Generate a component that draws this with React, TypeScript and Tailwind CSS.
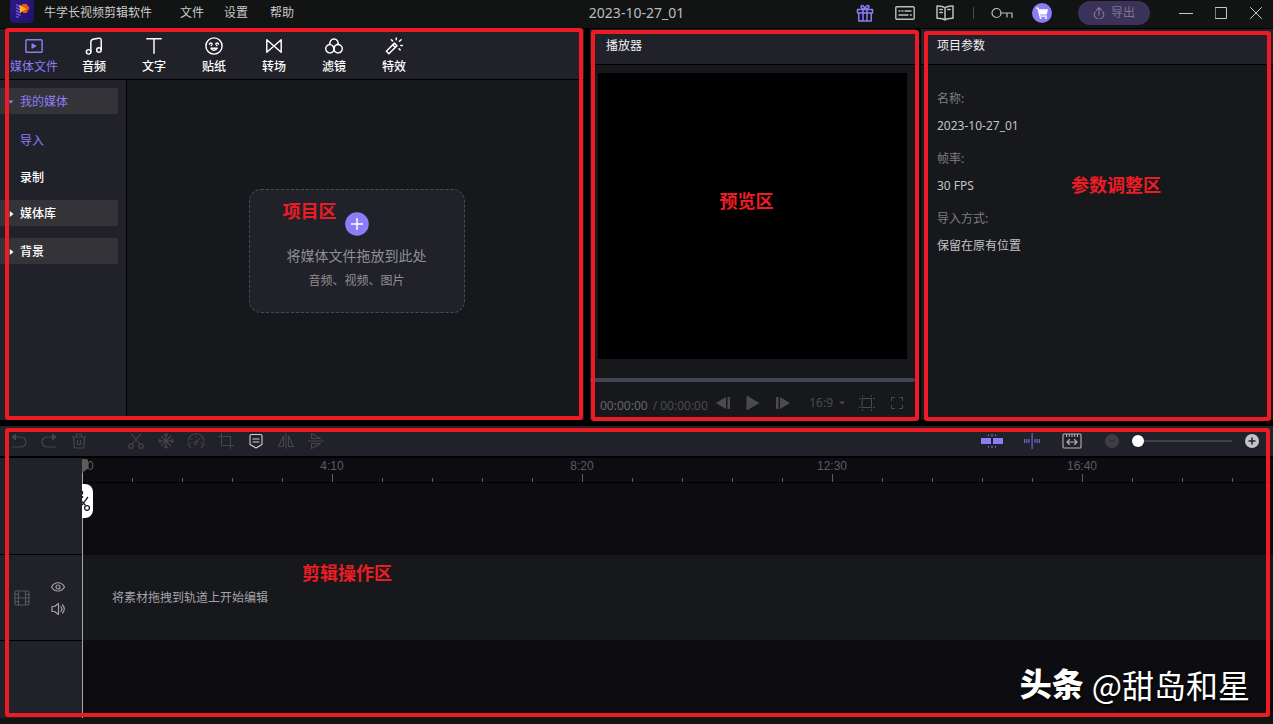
import type { ReactNode } from "react";

const FONT = "font-['Noto_Sans','Noto_Sans_CJK_SC',sans-serif]";

type IconProps = { children: ReactNode; box: string; className: string; stroke?: number };

function Icon({ children, box, className, stroke = 1.2 }: IconProps) {
  return (
    <svg
      viewBox={box}
      className={className}
      fill="none"
      stroke="currentColor"
      strokeWidth={stroke}
      strokeLinecap="round"
      strokeLinejoin="round"
      aria-hidden="true"
    >
      {children}
    </svg>
  );
}

function IconButton({ label, className, children }: { label: string; className: string; children: ReactNode }) {
  return (
    <button type="button" aria-label={label} className={`flex shrink-0 items-center justify-center ${className}`}>
      {children}
    </button>
  );
}

function Outline({ className }: { className: string }) {
  return <div className={`pointer-events-none absolute z-20 rounded-[3px] border-4 border-[#ed1c24] ${className}`} />;
}

function Note({ children, className }: { children: ReactNode; className: string }) {
  return (
    <span className={`absolute z-20 text-[18px] leading-6 font-bold whitespace-nowrap text-[#ed1c24] ${className}`}>
      {children}
    </span>
  );
}

function Logo() {
  return (
    <svg viewBox="0 0 24 24" className="size-6 shrink-0" aria-hidden="true">
      <defs>
        <linearGradient id="logoBg" x1="0" y1="0" x2="1" y2="1">
          <stop offset="0" stopColor="#2c1a86" />
          <stop offset="1" stopColor="#1f1168" />
        </linearGradient>
      </defs>
      <rect width="24" height="24" rx="4" fill="url(#logoBg)" />
      <path d="M6 5.500l4 2.500M6 8.500l4 2.500M6 11.500l4.500 2.500M6 14.500l4.500 2M6 17.500l3 1" stroke="#7d63f0" strokeWidth="1.300" />
      <path d="M12 5h4.500l3 4-3 5h-3.500z" fill="#f0501c" />
      <path d="M9.500 5.500l7 4.500-6.500 4z" fill="#ffb81a" />
    </svg>
  );
}

function TitleBar() {
  return (
    <header className="grid h-[29px] grid-cols-[1fr_auto_1fr] border-b border-black bg-[#111412] pb-0.5 text-[12px] leading-[18px] text-[#c9c9cb]">
      <div className="flex items-center pl-2.5">
        <div className="-mt-1">
          <Logo />
        </div>
        <span className="ml-2.5 whitespace-nowrap">牛学长视频剪辑软件</span>
        <nav className="ml-7 flex gap-5 whitespace-nowrap">
          <button type="button">文件</button>
          <button type="button">设置</button>
          <button type="button" className="ml-0.5">帮助</button>
        </nav>
      </div>
      <h1 className="self-center text-[14px] text-[#bcbcc0]">2023-10-27_01</h1>
      <div className="flex items-center justify-end">
        <IconButton label="礼物" className="w-10 text-[#8d7cf8]">
          <Icon box="0 0 18 18" className="size-[18px]" stroke={1.5}>
            <path d="M1.500 5.500h15v3.500h-15zM2.800 9v8h12.400V9M7 5.500V17M11 5.500V17M9 5.200C7 5 5 4 5 2.500 5 .8 8 .8 9 5.200zM9 5.200C11 5 13 4 13 2.500 13 .8 10 .8 9 5.200z" />
          </Icon>
        </IconButton>
        <IconButton label="快捷键" className="w-10 text-[#bdbdbf]">
          <Icon box="0 0 20 14" className="h-3.5 w-5" stroke={1.4}>
            <rect x=".8" y=".8" width="18.400" height="12.400" rx="1" />
            <path d="M4 5h1M7 5h1M10 5h6M4 9h9M15.500 9h.8" />
          </Icon>
        </IconButton>
        <IconButton label="教程" className="w-10 text-[#bdbdbf]">
          <Icon box="0 0 18 16" className="h-4 w-[18px]" stroke={1.5}>
            <path d="M9 2.800v12M9 2.800C7 1 4 .8 1 .9v12.300c3-.1 6 .1 8 1.800 2-1.700 5-1.900 8-1.800V.9C14 .8 11 1 9 2.800zM3.800 4.500h2.500M3.800 7.500h2.500M11.700 4.500h2.500" />
          </Icon>
        </IconButton>
        <div className="mx-2 h-3 w-px shrink-0 bg-[#4b4b50]" />
        <IconButton label="激活" className="w-10 text-[#bdbdbf]">
          <Icon box="0 0 22 12" className="h-3 w-[22px]" stroke={1.2}>
            <circle cx="5.500" cy="6" r="4.500" />
            <path d="M10 6h11v4.500M16 6v4" />
          </Icon>
        </IconButton>
        <IconButton label="购买" className="w-10 text-white">
          <svg viewBox="0 0 20 20" className="size-5" aria-hidden="true">
            <circle cx="10" cy="10" r="10" fill="#8d7cf8" />
            <path d="M4 5.200h2l1.800 8H15" fill="none" stroke="currentColor" strokeWidth="1.200" />
            <path d="M6.500 6.300H16l-1.300 5.200H7.700z" fill="currentColor" />
            <circle cx="8.500" cy="15" r="1" fill="currentColor" />
            <circle cx="14" cy="15" r="1" fill="currentColor" />
          </svg>
        </IconButton>
        <button
          type="button"
          className="ml-4 flex h-6 w-[72px] shrink-0 items-center justify-center gap-1.5 rounded-full bg-[#3a3259] text-[#7d778f]"
        >
          <Icon box="0 0 12 12" className="size-3" stroke={1.2}>
            <path d="M2.200 4.800a4.600 4.600 0 1 0 7.600 0M6 8.200V.8M3.600 3L6 .7 8.400 3" />
          </Icon>
          导出
        </button>
        <div className="ml-[18px] flex text-[#c6c6c8]">
          <IconButton label="最小化" className="w-[35px]">
            <Icon box="0 0 14 14" className="size-3.5" stroke={1}>
              <path d="M0 7.500h14" />
            </Icon>
          </IconButton>
          <IconButton label="最大化" className="w-[35px]">
            <Icon box="0 0 12 12" className="size-3" stroke={1}>
              <path d="M.5.500h11v11H.500z" />
            </Icon>
          </IconButton>
          <IconButton label="关闭" className="w-[35px]">
            <Icon box="0 0 12 12" className="size-3" stroke={1}>
              <path d="M.5.500l11 11M11.500.500l-11 11" />
            </Icon>
          </IconButton>
        </div>
      </div>
    </header>
  );
}

const TABS: { name: string; art: ReactNode }[] = [
  {
    name: "媒体文件",
    art: (
      <>
        <rect x="1" y="3" width="18" height="14" rx="1" />
        <path d="M8 7.800v4.400l3.800-2.200z" fill="currentColor" />
      </>
    ),
  },
  {
    name: "音频",
    art: (
      <>
        <circle cx="4" cy="16.500" r="2.500" />
        <circle cx="15.500" cy="14.500" r="2.500" />
        <path d="M6.500 16.500V5.500c0-1.800 1-2.700 2.500-3l6-1.200c2-.3 3 .5 3 2.200v11" />
      </>
    ),
  },
  { name: "文字", art: <path d="M2 2h16M10 2v16" /> },
  {
    name: "贴纸",
    art: (
      <>
        <circle cx="10" cy="10" r="9" />
        <path d="M5 8c.3-1.800 2.700-1.800 3 0M12 8c.3-1.800 2.700-1.800 3 0M7 9.500h.2M13 9.500h.2M6.500 12.500c1.500 3 5.500 3 7 0z" />
      </>
    ),
  },
  { name: "转场", art: <path d="M2 3v14l8-7zM18 3v14l-8-7z" /> },
  {
    name: "滤镜",
    art: (
      <>
        <path d="M5.700 8.500A4.600 4.600 0 1 1 14.300 8.500" />
        <path d="M14 8.300a4.700 4.700 0 1 1-4.200 4.700c0-1.900-.9-3.300-2.200-4" />
        <path d="M6 8.300a4.700 4.700 0 1 0 4.200 4.700c0-2.400 1.700-4.400 4-5" />
      </>
    ),
  },
  {
    name: "特效",
    art: (
      <>
        <path d="M1.500 15.800L10.500 6.800l2.800 2.800-9 9zM8.700 8.800l2.600 2.600" />
        <path d="M12.500 1v2M7 3l1.300 1.300M18 3l-2 1.800M17.500 9.500h2M15.500 13l1.300 1.300" />
      </>
    ),
  },
];

function GroupHeading({ open, children }: { open?: boolean; children: ReactNode }) {
  return (
    <button
      type="button"
      className={`flex h-[26px] w-[118px] items-center gap-1.5 rounded-r-[2px] bg-[#343438] pt-0.5 pl-2 ${open ? "text-[#8d7cf8]" : "font-medium text-white"}`}
    >
      <svg viewBox="0 0 6 6" className="size-1.5" fill="currentColor" aria-hidden="true">
        {open ? <path d="M0 1.500h5.500L2.700 4.500z" /> : <path d="M1.800 0v6L5.500 3z" />}
      </svg>
      {children}
    </button>
  );
}

function MediaPanel() {
  return (
    <section className="relative flex min-w-0 flex-col bg-[#17181c]">
      <nav className="flex h-[51px] border-b border-black bg-[#212129] pl-1">
        {TABS.map((tab, i) => (
          <button
            key={tab.name}
            type="button"
            className={`flex w-[60px] flex-col items-center pt-2 text-[12px] leading-[18px] whitespace-nowrap ${i === 0 ? "text-[#8d7cf8]" : "font-medium text-white"}`}
          >
            <Icon box="0 0 20 20" className="mb-[3px] size-[18px] shrink-0" stroke={1.6}>
              {tab.art}
            </Icon>
            {tab.name}
          </button>
        ))}
      </nav>
      <div className="flex flex-1">
        <aside className="w-[127px] shrink-0 border-r border-black bg-[#212129] pt-2 text-[12px] leading-[18px]">
          <GroupHeading open>我的媒体</GroupHeading>
          <ul className="pt-2 pb-1 pl-5">
            <li>
              <button type="button" className="h-[37px] text-[#8d7cf8]">导入</button>
            </li>
            <li>
              <button type="button" className="h-[37px] font-medium text-white">录制</button>
            </li>
          </ul>
          <div className="flex flex-col gap-3">
            <GroupHeading>媒体库</GroupHeading>
            <GroupHeading>背景</GroupHeading>
          </div>
        </aside>
        <div className="flex flex-1 items-center justify-center pt-0.5 pl-0.5">
          <button
            type="button"
            className="relative flex h-[124px] w-[216px] flex-col items-center rounded-xl border border-dashed border-[#4a4a50] bg-[#212129] pt-[22px] text-[#8f8f94]"
          >
            <svg viewBox="0 0 24 24" className="size-6" aria-hidden="true">
              <circle cx="12" cy="12" r="11.800" fill="#8d7cf8" />
              <path d="M12 6v12M6 12h12" stroke="#fff" strokeWidth="1.500" />
            </svg>
            <span className="mt-[7px] text-[14px] leading-[25px]">将媒体文件拖放到此处</span>
            <span className="text-[12px] leading-[26px]">音频、视频、图片</span>
            <Note className="top-[9px] left-[33px]">项目区</Note>
          </button>
        </div>
      </div>
      <Outline className="-top-px right-px bottom-0 left-[5px]" />
    </section>
  );
}

function PanelTitle({ children }: { children: ReactNode }) {
  return (
    <h2 className="h-9 border-b border-black bg-[#212129] px-4 pt-2 text-[12px] leading-[18px] text-[#f0f0f2]">
      {children}
    </h2>
  );
}

function PlayerPanel() {
  return (
    <section className="relative flex min-w-0 flex-col bg-[#17181c]">
      <PanelTitle>播放器</PanelTitle>
      <div className="flex flex-1 px-2 pt-2">
        <div className="flex min-h-[286px] flex-1 items-center justify-center bg-black">
          <span className="relative mt-[-30px] ml-[-12px] text-[18px] leading-6 font-bold text-[#ed1c24]">预览区</span>
        </div>
      </div>
      <div className="mt-[19px] h-1 rounded-sm bg-[#444452]" />
      <div className="flex h-[38px] items-center pt-1 pr-2.5 pl-2.5 text-[12px] leading-[18px] text-[#4b4b4f]">
        <span className="mt-1.5 text-[#66666a]">00:00:00</span>
        <span className="mt-1.5 ml-[5px] whitespace-pre">/ 00:00:00</span>
        <div className="flex">
          <IconButton label="上一帧" className="w-[30px]">
            <svg viewBox="0 0 14 12" className="h-3 w-3.5" fill="currentColor" aria-hidden="true">
              <path d="M10 0v12L0 6zM11.500 0H14v12h-2.500z" />
            </svg>
          </IconButton>
          <IconButton label="播放" className="w-[30px]">
            <svg viewBox="0 0 14 16" className="h-4 w-3.5" fill="currentColor" aria-hidden="true">
              <path d="M.5.500v15L13.500 8z" />
            </svg>
          </IconButton>
          <IconButton label="下一帧" className="w-[30px]">
            <svg viewBox="0 0 14 12" className="h-3 w-3.5" fill="currentColor" aria-hidden="true">
              <path d="M4 0v12l10-6zM0 0h2.500v12H0z" />
            </svg>
          </IconButton>
        </div>
        <button type="button" className="ml-auto flex items-center gap-1.5">
          16:9
          <svg viewBox="0 0 6 4" className="h-1 w-1.5" fill="currentColor" aria-hidden="true">
            <path d="M0 .500h6L3 3.500z" />
          </svg>
        </button>
        <IconButton label="安全框" className="ml-3.5 w-4">
          <Icon box="0 0 16 16" className="size-4" stroke={1}>
            <path d="M3.500 3.500h9v9h-9zM3.500.500v1M12.500.500v1M3.500 14.500v1M12.500 14.500v1M.5 3.500h1M.5 12.500h1M14.500 3.500h1M14.500 12.500h1" />
          </Icon>
        </IconButton>
        <IconButton label="全屏" className="ml-3.5 w-4">
          <Icon box="0 0 12 12" className="size-3" stroke={1}>
            <path d="M.5 3.500v-3h3M8.500.500h3v3M11.500 8.500v3h-3M3.500 11.500h-3v-3" />
          </Icon>
        </IconButton>
      </div>
      <Outline className="top-px -right-1 -bottom-px left-px" />
    </section>
  );
}

const PARAMS = [
  { label: "名称:", value: "2023-10-27_01" },
  { label: "帧率:", value: "30 FPS" },
  { label: "导入方式:", value: "保留在原有位置" },
];

function ParamsPanel() {
  return (
    <section className="relative min-w-0 bg-[#17181c]">
      <PanelTitle>项目参数</PanelTitle>
      <dl className="flex flex-col gap-[13px] px-4 pt-6 text-[12px] leading-5">
        {PARAMS.map((p) => (
          <div key={p.label} className="flex flex-col gap-[7px]">
            <dt className="text-[#7e7e84]">{p.label}</dt>
            <dd className="text-[#c4c4c8]">{p.value}</dd>
          </div>
        ))}
      </dl>
      <Note className="top-36 left-[150px]">参数调整区</Note>
      <Outline className="top-0.5 right-0.5 -bottom-px left-[3px]" />
    </section>
  );
}

const EDIT_TOOLS: { name: string; art: ReactNode }[] = [
  {
    name: "分割",
    art: (
      <>
        <circle cx="3" cy="13" r="2.300" />
        <circle cx="13" cy="13" r="2.300" />
        <path d="M4.200 11L12.500 1M11.800 11L3.500 1" />
      </>
    ),
  },
  {
    name: "定格",
    art: (
      <path d="M8 .500v15M.500 8h15M3.500 3.500l9 9M12.500 3.500l-9 9M6.500 1.500L8 3l1.500-1.500M6.500 14.500L8 13l1.500 1.500M1.500 6.500L3 8 1.500 9.500M14.500 6.500L13 8l1.500 1.500" />
    ),
  },
  {
    name: "速度",
    art: (
      <>
        <path d="M2.500 14.500a8 8 0 1 1 11 0M8 3.200v1M3.200 6l.8.500M2 10h1M13 10h1" />
        <circle cx="7.500" cy="10" r="1.500" />
        <path d="M8.600 8.800L12 5" />
      </>
    ),
  },
  { name: "裁剪", art: <path d="M3.500.500v12h12M.500 3.500h12v12" /> },
  {
    name: "标记",
    art: <path d="M3.500 1.500h9a1.500 1.500 0 0 1 1.500 1.500v8.500l-6 3.500-6-3.500V3a1.500 1.500 0 0 1 1.500-1.500zM5 6h6M5 9h6" />,
  },
  { name: "水平翻转", art: <path d="M8 .500v15M5.500 3v10.500H.500zM10.500 3v10.500h5z" /> },
  { name: "垂直翻转", art: <path d="M.500 8h15M3.500 5.500V.500l9 5zM3.500 10.500v5l9-5z" /> },
];

function ZoomSlider() {
  return (
    <input
      type="range"
      aria-label="时间轴缩放"
      min={0}
      max={100}
      defaultValue={0}
      className="mx-[13px] h-3 w-[100px] cursor-pointer appearance-none bg-transparent [&::-webkit-slider-runnable-track]:h-0.5 [&::-webkit-slider-runnable-track]:bg-[#3f3f4b] [&::-webkit-slider-thumb]:-mt-[5px] [&::-webkit-slider-thumb]:size-3 [&::-webkit-slider-thumb]:appearance-none [&::-webkit-slider-thumb]:rounded-full [&::-webkit-slider-thumb]:bg-white"
    />
  );
}

function EditToolbar() {
  return (
    <div className="flex h-8 items-center justify-between border-b-2 border-black bg-[#212129] pr-3.5 pl-1">
      <div className="flex text-[#45454a]">
        <IconButton label="撤销" className="w-[30px]">
          <Icon box="0 0 16 16" className="size-4" stroke={1.2}>
            <path d="M1.500 4h8.500a5 5 0 0 1 0 10H1.500" />
            <path d="M4.500 1.500v5L1 4z" fill="currentColor" />
          </Icon>
        </IconButton>
        <IconButton label="重做" className="w-[30px]">
          <Icon box="0 0 16 16" className="size-4" stroke={1.2}>
            <path d="M14.500 4H6a5 5 0 0 0 0 10h8.500" />
            <path d="M11.500 1.500v5L15 4z" fill="currentColor" />
          </Icon>
        </IconButton>
        <IconButton label="删除" className="mr-[27px] w-[30px]">
          <Icon box="0 0 16 16" className="size-4" stroke={1.2}>
            <path d="M1 4h14M5 3.500L6 1h4l1 2.500M2.500 4l.8 11h9.400l.8-11M6.500 7.500v4h3v-4" />
          </Icon>
        </IconButton>
        {EDIT_TOOLS.map((tool) => (
          <IconButton key={tool.name} label={tool.name} className={`w-[30px] ${tool.name === "标记" ? "text-[#d2d2d6]" : ""}`}>
            <Icon box="0 0 16 16" className="size-4" stroke={1.1}>
              {tool.art}
            </Icon>
          </IconButton>
        ))}
      </div>
      <div className="flex items-center">
        <IconButton label="磁吸" className="w-10 text-[#8d7cf8]">
          <svg viewBox="0 0 24 14" className="h-3.5 w-6" fill="currentColor" aria-hidden="true">
            <rect x="1" y="4" width="10" height="6" />
            <rect x="13" y="4" width="10" height="6" />
            <path d="M11.500 0h1v2.500h-1zM11.500 11.500h1V14h-1zM8 .500h1v1.500H8zM15 .500h1v1.500h-1zM8 12h1v1.500H8zM15 12h1v1.500h-1z" />
          </svg>
        </IconButton>
        <IconButton label="对齐" className="w-10 text-[#7263cf]">
          <svg viewBox="0 0 16 16" className="size-4" fill="currentColor" aria-hidden="true">
            <path d="M7.500 0h1.200v16H7.500zM0 6h1.200v4H0zM2.200 6h1.200v4H2.200zM4.400 6h1.200v4H4.400zM10.400 6h1.200v4h-1.200zM12.600 6h1.200v4h-1.200zM14.800 6H16v4h-1.200z" />
          </svg>
        </IconButton>
        <IconButton label="适应时间轴" className="w-10 text-[#b4b4b8]">
          <Icon box="0 0 20 16" className="h-4 w-5" stroke={1.1}>
            <rect x="1" y="1" width="18" height="14" rx="1" />
            <path d="M4.500 1.500v2M7.200 1.500v2M10 1.500v2M12.800 1.500v2M15.500 1.500v2M5 9h10M7.500 6.500L5 9l2.500 2.500M12.500 6.500L15 9l-2.500 2.500" />
          </Icon>
        </IconButton>
        <IconButton label="缩小" className="ml-[13px] w-3.5">
          <svg viewBox="0 0 14 14" className="size-3.5" aria-hidden="true">
            <circle cx="7" cy="7" r="7" fill="#3e3e42" />
            <path d="M4 7h6" stroke="#2f2f34" strokeWidth="1.200" />
          </svg>
        </IconButton>
        <ZoomSlider />
        <IconButton label="放大" className="w-3.5">
          <svg viewBox="0 0 14 14" className="size-3.5" aria-hidden="true">
            <circle cx="7" cy="7" r="7" fill="#c3c3c7" />
            <path d="M3.500 7h7M7 3.500v7" stroke="#212129" strokeWidth="1.500" />
          </svg>
        </IconButton>
      </div>
    </div>
  );
}

const MARKS: Record<number, string> = { 5: "4:10", 10: "8:20", 15: "12:30", 20: "16:40" };

function Ruler() {
  return (
    <div className="flex h-[25px] items-end overflow-hidden border-b border-black bg-[#0d0d11] font-['Liberation_Sans',sans-serif] text-[12px] leading-4 text-[#5b5b64]">
      {Array.from({ length: 40 }, (_, i) => (
        <div key={i} className="relative flex h-full w-[50px] shrink-0 items-end">
          {i === 0 && <span className="absolute top-0 left-[5px]">0</span>}
          {MARKS[i] && <span className="absolute top-0 left-0 -translate-x-1/2">{MARKS[i]}</span>}
          <div className={`w-px bg-[#5b5b64] ${i === 0 ? "h-0" : i % 5 === 0 ? "h-2" : "h-1"}`} />
        </div>
      ))}
    </div>
  );
}

function Playhead() {
  return (
    <div className="absolute top-px bottom-0 left-[82px] z-10 w-px bg-[#a8a8ac]">
      <svg viewBox="0 0 6 14" className="absolute top-0 left-0 h-3.5 w-1.5" aria-hidden="true">
        <path d="M0 0h5l1 1.500v8L0 14z" fill="#5c5c5c" />
      </svg>
      <button
        type="button"
        aria-label="在播放头处分割"
        className="absolute top-[25px] left-0 flex h-[34px] w-[11px] items-center overflow-hidden rounded-r-lg bg-white text-[#222]"
      >
        <svg viewBox="0 0 11 20" className="h-5 w-[11px]" fill="none" stroke="currentColor" strokeWidth="1.300" aria-hidden="true">
          <path d="M6 6L0 14M0 10.500l3.500 4M.500 0v3.500M.500 5v2" />
          <circle cx="5" cy="17" r="2.400" />
        </svg>
      </button>
    </div>
  );
}

function Timeline() {
  return (
    <section className="relative flex flex-1 flex-col bg-[#0d0d11]">
      <EditToolbar />
      <div className="relative grid flex-1 grid-cols-[82px_minmax(0,1fr)] grid-rows-[auto_72px_85px_minmax(78px,1fr)]">
        <div className="bg-[#212129]" />
        <Ruler />
        <div className="border-b border-black bg-[#212129]" />
        <div />
        <div className="flex items-center justify-between bg-[#212129] pr-4 pl-3.5">
          <Icon box="0 0 16 16" className="size-4 text-[#55555f]" stroke={1.2}>
            <rect x="1" y="1" width="14" height="14" rx="1.500" />
            <path d="M4.500 1v14M11.500 1v14M4.500 8h7M1 4.500h3.500M1 8h3.500M1 11.500h3.500M11.500 4.500H15M11.500 8H15M11.500 11.500H15" />
          </Icon>
          <div className="flex flex-col gap-2 text-[#a2a2a6]">
            <IconButton label="显示轨道" className="h-3.5 w-4">
              <Icon box="0 0 16 14" className="h-3.5 w-4" stroke={1.2}>
                <path d="M1.500 7C4.500 1.300 11.500 1.300 14.500 7 11.500 12.300 4.500 12.300 1.500 7z" />
                <circle cx="8" cy="7" r="2" />
              </Icon>
            </IconButton>
            <IconButton label="静音轨道" className="h-3.5 w-4">
              <Icon box="0 0 16 14" className="h-3.5 w-4" stroke={1.2}>
                <path d="M2 4.500h2.500L8.500 1.500v11l-4-3H2zM10.800 4.500c1.200 1.500 1.200 3.500 0 5M12.600 3c2 2.400 2 5.600 0 8" />
              </Icon>
            </IconButton>
          </div>
        </div>
        <div className="flex items-center bg-[#17181c] pl-[30px] text-[12px] leading-[18px] text-[#a4a4a8]">
          将素材拖拽到轨道上开始编辑
        </div>
        <div className="border-t border-black bg-[#212129]" />
        <div />
        <Playhead />
      </div>
      <Note className="top-[135px] left-[302px]">剪辑操作区</Note>
      <Outline className="top-0.5 right-[3px] bottom-px left-[5px]" />
      <div className="absolute right-[23px] bottom-2.5 flex items-center gap-2 text-[32px] leading-[48px] whitespace-nowrap text-white [text-shadow:1px_2px_2px_#000]">
        <span className="font-black">头条</span>
        <span className="font-['Noto_Sans_CJK_SC',sans-serif]">@甜岛和星</span>
      </div>
    </section>
  );
}

export default function App() {
  return (
    <div className={`flex min-h-screen flex-col overflow-hidden bg-black ${FONT}`}>
      <TitleBar />
      <main className="flex flex-1 flex-col gap-1.5">
        <div className="grid grid-cols-[584fr_325fr_352fr] gap-1.5">
          <MediaPanel />
          <PlayerPanel />
          <ParamsPanel />
        </div>
        <Timeline />
      </main>
      <footer className="h-1.5 bg-[#111412]" />
    </div>
  );
}
